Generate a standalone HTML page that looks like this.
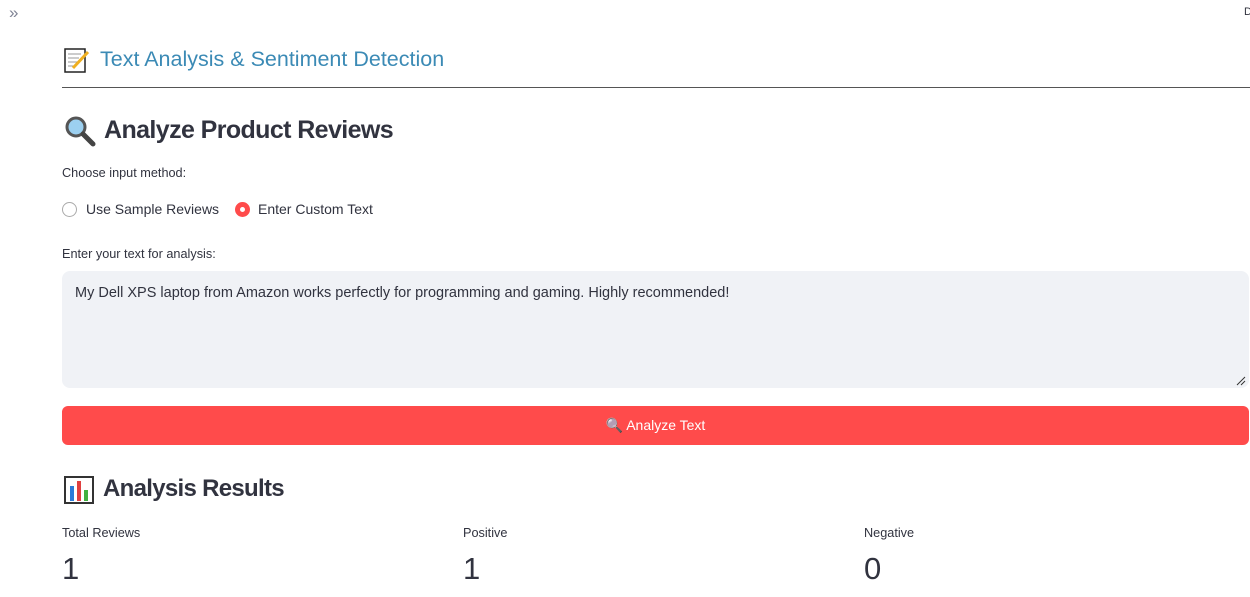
<!DOCTYPE html>
<html><head><meta charset="utf-8"><style>
*{box-sizing:border-box;margin:0;padding:0}
body{width:1250px;height:597px;overflow:hidden;background:#fff;font-family:"Liberation Sans",sans-serif;color:#31333f;position:relative}
.a{position:absolute}
.t{font-size:12.7px}
</style></head><body>
<div class="a" style="left:9px;top:3px;font-size:17px;color:#808495">»</div>
<div class="a" style="left:1244px;top:6px;font-size:11px">D</div>
<svg class="a" style="left:64px;top:48px" width="26" height="25" viewBox="0 0 26 25"><rect x="1" y="1" width="20" height="23" fill="#fff" stroke="#222" stroke-width="1.5"/><g stroke="#999" stroke-width="1"><line x1="4" y1="6" x2="17" y2="6"/><line x1="4" y1="10" x2="15" y2="10"/><line x1="4" y1="14" x2="13" y2="14"/><line x1="4" y1="18" x2="11" y2="18"/></g><line x1="9" y1="20" x2="24" y2="4" stroke="#f0b020" stroke-width="3"/></svg>
<div class="a" style="left:100px;top:47px;font-size:21.5px;color:#3b8ab5">Text Analysis &amp; Sentiment Detection</div>
<div class="a" style="left:62px;top:87px;width:1188px;height:1px;background:#555"></div>
<svg class="a" style="left:64px;top:115px" width="32" height="32" viewBox="0 0 32 32"><circle cx="12" cy="12" r="9" fill="#9cd0f0" stroke="#555" stroke-width="3"/><line x1="19" y1="19" x2="29" y2="29" stroke="#444" stroke-width="5" stroke-linecap="round"/></svg>
<div class="a" style="left:104px;top:116px;font-size:25px;letter-spacing:-0.6px;font-weight:bold">Analyze Product Reviews</div>
<div class="a t" style="left:62px;top:166px">Choose input method:</div>
<div class="a" style="left:62px;top:202px;width:15px;height:15px;border:1px solid #aaa;border-radius:50%"></div>
<div class="a" style="left:86px;top:201px;font-size:14px">Use Sample Reviews</div>
<div class="a" style="left:235px;top:202px;width:15px;height:15px;border-radius:50%;background:#ff4b4b"><div style="margin:5px;width:5px;height:5px;border-radius:50%;background:#fff"></div></div>
<div class="a" style="left:258px;top:201px;font-size:14px">Enter Custom Text</div>
<div class="a t" style="left:62px;top:247px">Enter your text for analysis:</div>
<div class="a" style="left:62px;top:271px;width:1187px;height:117px;background:#f0f2f6;border-radius:8px"></div>
<div class="a" style="left:75px;top:285px;font-size:14.5px">My Dell XPS laptop from Amazon works perfectly for programming and gaming. Highly recommended!</div>
<svg class="a" style="left:1236px;top:376px" width="10" height="10"><path d="M1 9L9 1M5 9L9 5" stroke="#333" stroke-width="1"/></svg>
<div class="a" style="left:62px;top:406px;width:1187px;height:39px;background:#ff4b4b;border-radius:6px;color:#fff;font-size:14px;text-align:center;line-height:39px">🔍 Analyze Text</div>
<svg class="a" style="left:64px;top:476px" width="30" height="28" viewBox="0 0 30 28"><rect x="1" y="1" width="28" height="26" fill="#fff" stroke="#333" stroke-width="2"/><rect x="6" y="10" width="4" height="15" fill="#2b7bd8"/><rect x="13" y="5" width="4" height="20" fill="#e04040"/><rect x="20" y="14" width="4" height="11" fill="#40b040"/></svg>
<div class="a" style="left:103px;top:475px;font-size:24px;letter-spacing:-0.7px;font-weight:bold">Analysis Results</div>
<div class="a t" style="left:62px;top:526px">Total Reviews</div>
<div class="a t" style="left:463px;top:526px">Positive</div>
<div class="a t" style="left:864px;top:526px">Negative</div>
<div class="a" style="left:62px;top:551px;font-size:31px">1</div>
<div class="a" style="left:463px;top:551px;font-size:31px">1</div>
<div class="a" style="left:864px;top:551px;font-size:31px">0</div>
</body></html>
